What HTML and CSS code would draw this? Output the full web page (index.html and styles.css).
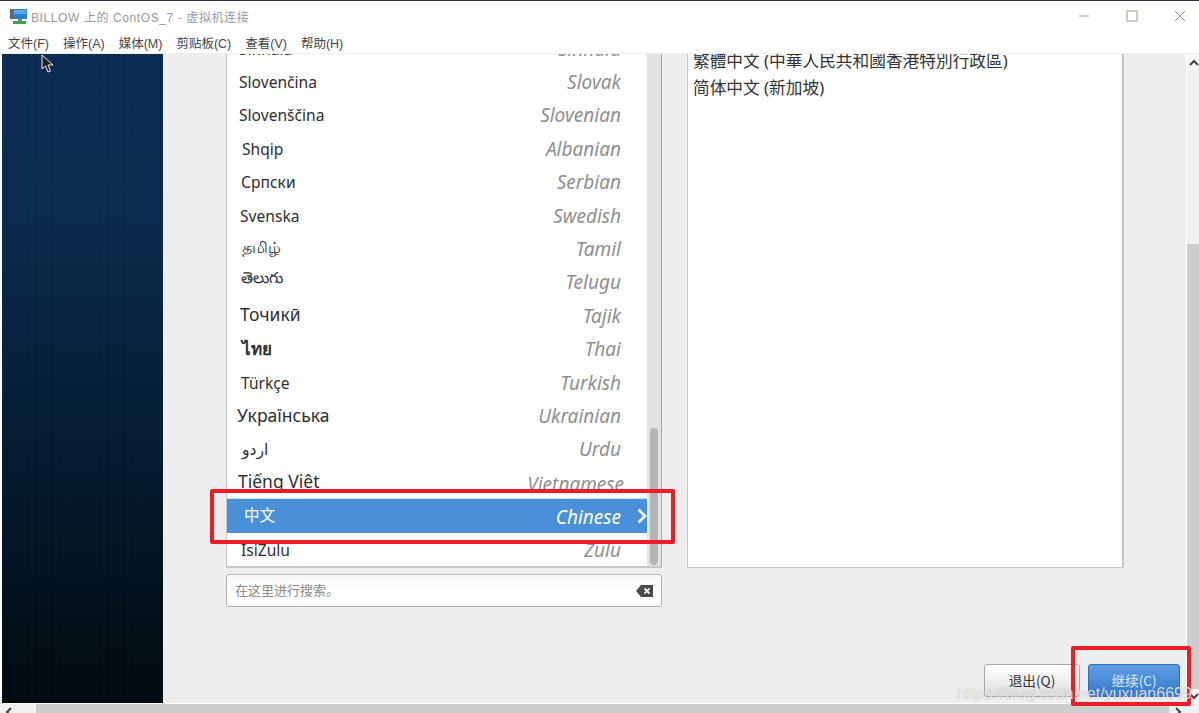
FILE: index.html
```html
<!DOCTYPE html>
<html lang="zh-CN">
<head>
<meta charset="utf-8">
<title>BILLOW 上的 ContOS_7 - 虚拟机连接</title>
<link rel="stylesheet" href="styles.css">
</head>
<body>
<div class="window">
  <header class="chrome">
    <div class="titlebar">
      <svg class="appicon" width="17" height="16" viewBox="0 0 17 16">
        <rect x="0" y="1" width="5" height="10" fill="#5c6670"/>
        <rect x="3" y="1" width="14" height="10" fill="#2f7fd0"/>
        <rect x="4" y="2" width="12" height="4" fill="#55a8ea"/>
        <rect x="8" y="11" width="4" height="2" fill="#7a8a7a"/>
        <rect x="3" y="13" width="13" height="3" fill="#3fa34a"/>
      </svg>
      <span class="title">BILLOW 上的 ContOS_7 - 虚拟机连接</span>
      <div class="winbtns">
        <svg width="12" height="12" viewBox="0 0 12 12"><path d="M1 6h10" stroke="#9a9a9a" fill="none"/></svg>
        <svg width="12" height="12" viewBox="0 0 12 12"><rect x="1" y="1" width="10" height="10" stroke="#9a9a9a" fill="none"/></svg>
        <svg width="12" height="12" viewBox="0 0 12 12"><path d="M1 1l10 10M11 1L1 11" stroke="#9a9a9a" fill="none"/></svg>
      </div>
    </div>
    <nav class="menubar">
      <span>文件(F)</span><span>操作(A)</span><span>媒体(M)</span><span>剪贴板(C)</span><span>查看(V)</span><span>帮助(H)</span>
    </nav>
  </header>

  <div class="desktop">
    <aside class="sidebar"></aside>
    <main class="installer">
      <div class="panes">
        <section class="langpane">
          <div class="listbox">
            <ul class="langlist">
              <li class="row"><span class="native">Sinhala</span><span class="english">Sinhala</span></li>
              <li class="row"><span class="native n-239">Slovenčina</span><span class="english">Slovak</span></li>
              <li class="row"><span class="native n-239">Slovenščina</span><span class="english">Slovenian</span></li>
              <li class="row"><span class="native n-242">Shqip</span><span class="english">Albanian</span></li>
              <li class="row"><span class="native n-241">Српски</span><span class="english">Serbian</span></li>
              <li class="row"><span class="native n-240">Svenska</span><span class="english">Swedish</span></li>
              <li class="row"><span class="native n-242 lift-2">தமிழ்</span><span class="english">Tamil</span></li>
              <li class="row"><span class="native n-241 lift-5">తెలుగు</span><span class="english">Telugu</span></li>
              <li class="row"><span class="native n-240 lift-2 large">Точикӣ</span><span class="english">Tajik</span></li>
              <li class="row"><span class="native n-242 strong">ไทย</span><span class="english">Thai</span></li>
              <li class="row"><span class="native n-241">Türkçe</span><span class="english">Turkish</span></li>
              <li class="row"><span class="native n-237 lift-1 large">Українська</span><span class="english">Ukrainian</span></li>
              <li class="row"><span class="native n-242">اردو</span><span class="english">Urdu</span></li>
              <li class="row"><span class="native n-238 lift-2 large">Tiếng Việt</span><span class="english nudge">Vietnamese</span></li>
              <li class="row selected"><span class="native n-244 lift-1">中文</span><span class="english">Chinese</span>
                <svg class="chev" width="10" height="16" viewBox="0 0 10 16"><path d="M1.5 1.5L8 8l-6.500 6.500" fill="none" stroke="#fff" stroke-width="2.600"/></svg>
              </li>
              <li class="row"><span class="native n-241">IsiZulu</span><span class="english">Zulu</span></li>
            </ul>
            <div class="listscroll"><div class="listthumb"></div></div>
          </div>
          <div class="search">
            <span class="placeholder">在这里进行搜索。</span>
            <svg width="17" height="12" viewBox="0 0 17 12"><path d="M5 0h12v12H5L0 6z" fill="#4a4a4a"/><path d="M8.500 3.500l5 5M13.500 3.500l-5 5" stroke="#eee" stroke-width="1.800"/></svg>
          </div>
        </section>
        <section class="localepane">
          <p>繁體中文 (中華人民共和國香港特別行政區)</p>
          <p>简体中文 (新加坡)</p>
        </section>
      </div>
      <footer class="actions">
        <button class="btn quit">退出(Q)</button>
        <button class="btn continue">继续(C)</button>
      </footer>
    </main>
    <div class="vscroll">
      <svg width="10" height="7" viewBox="0 0 10 7"><path d="M1 6l4-4 4 4" fill="none" stroke="#444" stroke-width="2"/></svg>
      <div class="vtrack"><div class="vtrack-off"></div></div>
      <svg width="10" height="7" viewBox="0 0 10 7"><path d="M1 1l4 4 4-4" fill="none" stroke="#444" stroke-width="2"/></svg>
    </div>
  </div>

  <div class="hscroll">
    <svg width="7" height="10" viewBox="0 0 7 10"><path d="M6 1L2 5l4 4" fill="none" stroke="#444" stroke-width="2"/></svg>
    <div class="htrack"></div>
    <svg class="harrow-end" width="7" height="10" viewBox="0 0 7 10"><path d="M1 1l4 4-4 4" fill="none" stroke="#444" stroke-width="2"/></svg>
  </div>

  <svg class="cursor" width="14" height="20" viewBox="0 0 14 20"><path d="M1 1v14l3.500-3 2.500 6 2.500-1-2.500-6h5z" fill="#222" stroke="#eee" stroke-width="1"/></svg>
  <div class="mark mark-row"></div>
  <div class="mark mark-btn"></div>
  <div class="watermark">https://blog.csdn.net/yuxuan6699</div>
</div>
</body>
</html>
```
FILE: styles.css
```css
* { box-sizing: border-box; }
html, body { margin: 0; height: 100%; }
body { font-family: "Noto Sans", "Noto Sans CJK SC", "DejaVu Sans", sans-serif; overflow: hidden; background: #fff; }
.window { position: relative; width: 1199px; height: 713px; display: flex; flex-direction: column; overflow: hidden; }

.chrome { height: 54px; flex: none; background: #fff; border-top: 1px solid #2c3546; border-bottom: 1px solid #f0f0f0; }
.titlebar { height: 30px; display: flex; align-items: center; padding: 0 0 0 10px; }
.appicon { flex: none; }
.title { margin-left: 4px; font: 12px "Liberation Sans", "Noto Sans CJK SC", sans-serif; color: #999; letter-spacing: .6px; }
.winbtns { margin-left: auto; display: flex; gap: 36px; padding-right: 13px; }
.menubar { display: flex; gap: 14px; padding: 1px 0 0 8px; height: 22px; align-items: center; font: 12.500px "Liberation Sans", "Noto Sans CJK SC", sans-serif; color: #444; }

.desktop { flex: 1; min-height: 0; display: flex; padding-left: 2px; background: #fff; }
.sidebar { width: 161px; flex: none; background: repeating-linear-gradient(90deg, rgba(255,255,255,.009) 0 3px, transparent 3px 9px), linear-gradient(180deg, #0b2c52 0%, #0a2a4d 25%, #07203a 50%, #031525 75%, #000d14 92%, #000c12 100%); }
.installer { flex: 1; min-width: 0; background: #eeeeee; display: flex; flex-direction: column; }
.panes { display: flex; gap: 25px; padding-left: 63px; }

.langpane { width: 436px; flex: none; }
.listbox { height: 514px; display: flex; background: #fff; border: solid #c6c6c6; border-width: 0 1px 2px 1px; border-right-color: #a8a8a8; overflow: hidden; }
.langlist { list-style: none; margin: -22px 0 0; padding: 0; flex: 1; min-width: 0; }
.row { height: 33.400px; display: flex; align-items: center; justify-content: space-between; padding: 0 26px 0 12px; font-size: 15.600px; color: #2e2e2e; position: relative; white-space: nowrap; }
.english { font-style: italic; font-size: 19px; color: #8f8f8f; }
.native { line-height: 20px; position: relative; }
.n-237 { margin-left: -2px; }
.n-238 { margin-left: -1px; }
.n-239 { margin-left: 0; }
.n-240 { margin-left: 1px; }
.n-241 { margin-left: 2px; }
.n-242 { margin-left: 3px; }
.n-244 { margin-left: 5px; }
.lift-1 { top: -1px; }
.lift-2 { top: -2px; }
.lift-5 { top: -5px; }
.large { font-size: 17.500px; }
.nudge { position: relative; left: 3px; top: 1px; }
.strong { font-weight: 700; font-size: 17px; }
.row.selected { background: #4a90d9; color: #fff; box-shadow: 0 -1px 0 #d5e5f5; }
.row.selected .english { color: #fff; position: relative; top: 1px; }
.chev { position: absolute; right: 0; top: 9px; }
.listscroll { width: 14px; flex: none; background: #e2e2e2; padding: 374px 3px 3px 3px; }
.listthumb { height: 137px; border-radius: 4px; background: #b4b4b4; }

.search { margin-top: 6px; height: 33px; display: flex; align-items: center; justify-content: space-between; padding: 0 8px; background: linear-gradient(180deg, #f6f6f6, #fff 50%); border: 1px solid #b4b4b4; border-radius: 3px; }
.placeholder { font-size: 13px; color: #8b8b8b; padding-bottom: 2px; }

.localepane { width: 437px; flex: none; height: 514px; background: #fff; border: solid #c6c6c6; border-width: 0 2px 1px 1px; padding: 0 5px; font-size: 16.700px; color: #333; overflow: hidden; }
.localepane p { margin: 0; height: 27px; line-height: 27px; white-space: nowrap; }
.localepane p:first-child { margin-top: -7px; }

.actions { margin-top: auto; display: flex; justify-content: flex-end; gap: 8px; padding: 0 6px 0 0; height: 39px; align-items: flex-start; }
.btn { width: 96px; height: 33px; font: 13.600px "Noto Sans CJK SC", sans-serif; border-radius: 3px; border: 1px solid #a8a8a8; background: linear-gradient(180deg, #fff, #dedede); color: #333; padding: 0 0 2px; }
.btn.continue { width: 92px; background: linear-gradient(180deg, #5f9fe4, #3478cc); border-color: #2f6fb8; color: #dfeaf7; }

.vscroll { width: 13px; flex: none; background: #f6f6f6; border-left: 1px solid #fff; display: flex; flex-direction: column; align-items: flex-end; padding: 5px 0 3px; gap: 4px; }
.vtrack { flex: 1; width: 12px; background: #cdcdcd; }
.vtrack-off { height: 174px; background: #f0f0f0; }

.hscroll { height: 10px; flex: none; display: flex; align-items: flex-start; background: #f0f0f0; padding: 3px 17px 0 5px; gap: 24px; border-top: 1px solid #fff; overflow: hidden; }
.hscroll svg { flex: none; }
.htrack { flex: 1; height: 9px; background: #cdcdcd; margin-top: -3px; }
.harrow-end { margin-left: -18px; }

.cursor { position: absolute; left: 41px; top: 54px; }
.mark { position: absolute; border: 4px solid #ee1c25; border-radius: 2px; pointer-events: none; }
.mark-row { left: 210px; top: 489px; width: 465px; height: 55px; }
.mark-btn { left: 1071px; top: 646px; width: 120px; height: 60px; }
.watermark { position: absolute; left: 957px; top: 685px; font: 16px "Liberation Sans", sans-serif; color: rgba(255,255,255,.72); text-shadow: 0 0 1px rgba(120,120,120,.6); white-space: nowrap; }
```
